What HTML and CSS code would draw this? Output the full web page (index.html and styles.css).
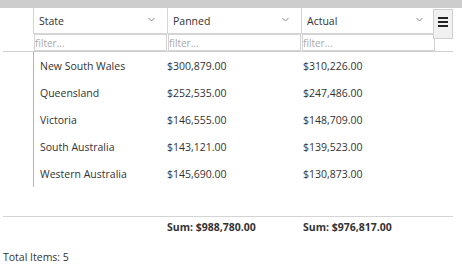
FILE: index.html
```html
<!DOCTYPE html>
<html>
<head>
<meta charset="utf-8">
<link rel="stylesheet" href="styles.css">
</head>
<body>
<div class="topbar"></div>
<div class="grid">
  <div class="hrow">
    <div class="rh"></div>
    <div class="hcell"><span>State</span><svg class="chev" width="7" height="5" viewBox="0 0 7 5"><path d="M0.5 1 L3.5 4 L6.5 1" fill="none" stroke="#888" stroke-width="1"/></svg></div>
    <div class="hcell"><span>Panned</span><svg class="chev" width="7" height="5" viewBox="0 0 7 5"><path d="M0.5 1 L3.5 4 L6.5 1" fill="none" stroke="#888" stroke-width="1"/></svg></div>
    <div class="hcell"><span>Actual</span><svg class="chev" width="7" height="5" viewBox="0 0 7 5"><path d="M0.5 1 L3.5 4 L6.5 1" fill="none" stroke="#888" stroke-width="1"/></svg></div>
  </div>
  <div class="frow">
    <div class="rh"></div>
    <div class="fcell"><input class="filter" placeholder="filter..."></div>
    <div class="fcell"><input class="filter" placeholder="filter..."></div>
    <div class="fcell"><input class="filter" placeholder="filter..."></div>
  </div>
  <div class="menu-btn"><span></span><span></span><span></span></div>
  <div class="body">
    <div class="row"><div class="rh"></div><div class="c c1">New South Wales</div><div class="c c2">$300,879.00</div><div class="c c3">$310,226.00</div></div>
    <div class="row"><div class="rh"></div><div class="c c1">Queensland</div><div class="c c2">$252,535.00</div><div class="c c3">$247,486.00</div></div>
    <div class="row"><div class="rh"></div><div class="c c1">Victoria</div><div class="c c2">$146,555.00</div><div class="c c3">$148,709.00</div></div>
    <div class="row"><div class="rh"></div><div class="c c1">South Australia</div><div class="c c2">$143,121.00</div><div class="c c3">$139,523.00</div></div>
    <div class="row"><div class="rh"></div><div class="c c1">Western Australia</div><div class="c c2">$145,690.00</div><div class="c c3">$130,873.00</div></div>
  </div>
  <div class="foot">
    <div class="rh"></div>
    <div class="c c1"></div>
    <div class="c c2 sum">Sum: $988,780.00</div>
    <div class="c c3 sum">Sum: $976,817.00</div>
  </div>
</div>
<div class="total">Total Items: 5</div>
</body>
</html>
```
FILE: styles.css
```css
* { box-sizing: border-box; }
html, body { margin: 0; padding: 0; background: #fff; }
body {
  font-family: "Open Sans", "Noto Sans", sans-serif;
  font-size: 10.5px;
  color: #333;
  width: 462px;
}
.topbar { height: 8px; background: #cdcdcd; }
.grid { position: relative; margin-left: 3px; width: 450px; }
.rh { width: 30px; flex: none; }
.hrow { display: flex; height: 26px; }
.hcell {
  width: 134px; flex: none;
  border-left: 1px solid #d4d4d4;
  border-bottom: 1px solid #d4d4d4;
  display: flex; align-items: center; justify-content: space-between;
  padding: 0 12px 0 5px;
}
.chev { margin-top: -3px; }
.frow { display: flex; height: 18px; border-bottom: 1px solid #cfcfcf; }
.fcell { width: 134px; flex: none; padding: 0 0 1px 1px; }
.filter {
  display: block; width: 100%; height: 17px; margin: 0;
  border: 1px solid #d4d4d4; padding: 0 0 0 0;
  font-family: inherit; font-size: 10px; color: #333; outline: none;
}
.filter::placeholder { color: #aaa; }
.menu-btn {
  position: absolute; left: 430px; top: 1px;
  width: 20px; height: 30px;
  background: #f0f0f0; border: 1px solid #cfcfcf;
  display: flex; flex-direction: column; align-items: center;
  padding-top: 7px; gap: 2px;
}
.menu-btn span { display: block; width: 10px; height: 2px; background: #222; }
.body { display: flex; flex-direction: column; }
.row { display: flex; height: 27px; align-items: stretch; }
.c { display: flex; align-items: center; flex: none; white-space: nowrap; }
.row .c1 { border-left: 1px solid #b4b4b4; }
.c1 { width: 128px; padding-left: 6px; }
.c2 { width: 136px; padding-left: 6px; }
.c3 { width: 138px; padding-left: 6px; }
.foot { display: flex; height: 20px; margin-top: 29px; border-top: 1px solid #d4d4d4; }
.sum { font-weight: 700; }
.total { margin: 14px 0 0 3px; }
```
